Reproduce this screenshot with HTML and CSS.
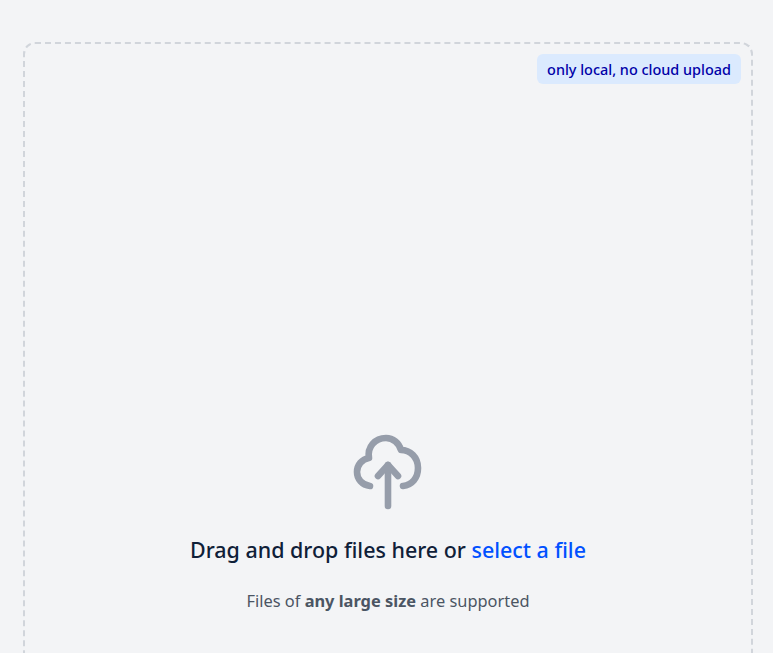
FILE: index.html
```html
<!DOCTYPE html>
<html lang="en">
<head>
    <meta charset="UTF-8">
    <meta name="viewport" content="width=device-width, initial-scale=1.0">
    <title>Upload</title>
    <link rel="stylesheet" href="styles.css">
</head>
<body>
    <div class="dropzone">
        <div class="badge">only local, no cloud upload</div>
        <svg class="upload-icon" viewBox="0 0 80 80" fill="none" stroke="#969daa" stroke-width="6.6" stroke-linecap="round" stroke-linejoin="round">
            <path d="M22 61C14 60 9 54 9 47C9 40 14 34 21 33C19 22 27 13 38 13C45 13 51 18 53 25C62 25 70 32 70 43C70 53 64 60 55 61"/>
            <path d="M40 81V40"/>
            <path d="M30 51L40 40L50 51"/>
        </svg>
        <p class="title">Drag and drop files here or <a href="#">select a file</a></p>
        <p class="subtitle">Files of <strong>any large size</strong> are supported</p>
    </div>
</body>
</html>
```

FILE: styles.css
```css
* {
    margin: 0;
    padding: 0;
    box-sizing: border-box;
}

html, body {
    height: 653px;
    overflow: hidden;
}

body {
    font-family: 'Noto Sans', 'Open Sans', sans-serif;
    background: #f3f4f6;
    padding: 42px 20px 0 23px;
}

.dropzone {
    position: relative;
    height: 611px;
    border: 2px dashed #d1d5db;
    border-bottom: none;
    border-radius: 12px 12px 0 0;
    display: flex;
    flex-direction: column;
    align-items: center;
    padding-top: 381px;
}

.badge {
    position: absolute;
    top: 10px;
    right: 10px;
    background: #dbeafe;
    color: #0000a8;
    font-size: 14.45px;
    font-weight: 500;
    line-height: 20px;
    padding: 6px 10px 4px;
    border-radius: 6px;
}

.upload-icon {
    width: 80px;
    height: 80px;
    overflow: visible;
    margin-bottom: 29px;
}

.title {
    font-size: 21.45px;
    font-weight: 500;
    line-height: 32px;
    color: #0f2038;
    margin-bottom: 23px;
}

.title a {
    color: #0050ff;
    text-decoration: none;
}

.subtitle {
    font-size: 16.4px;
    line-height: 24px;
    color: #4b5563;
}

.subtitle strong {
    font-weight: 700;
}
```
